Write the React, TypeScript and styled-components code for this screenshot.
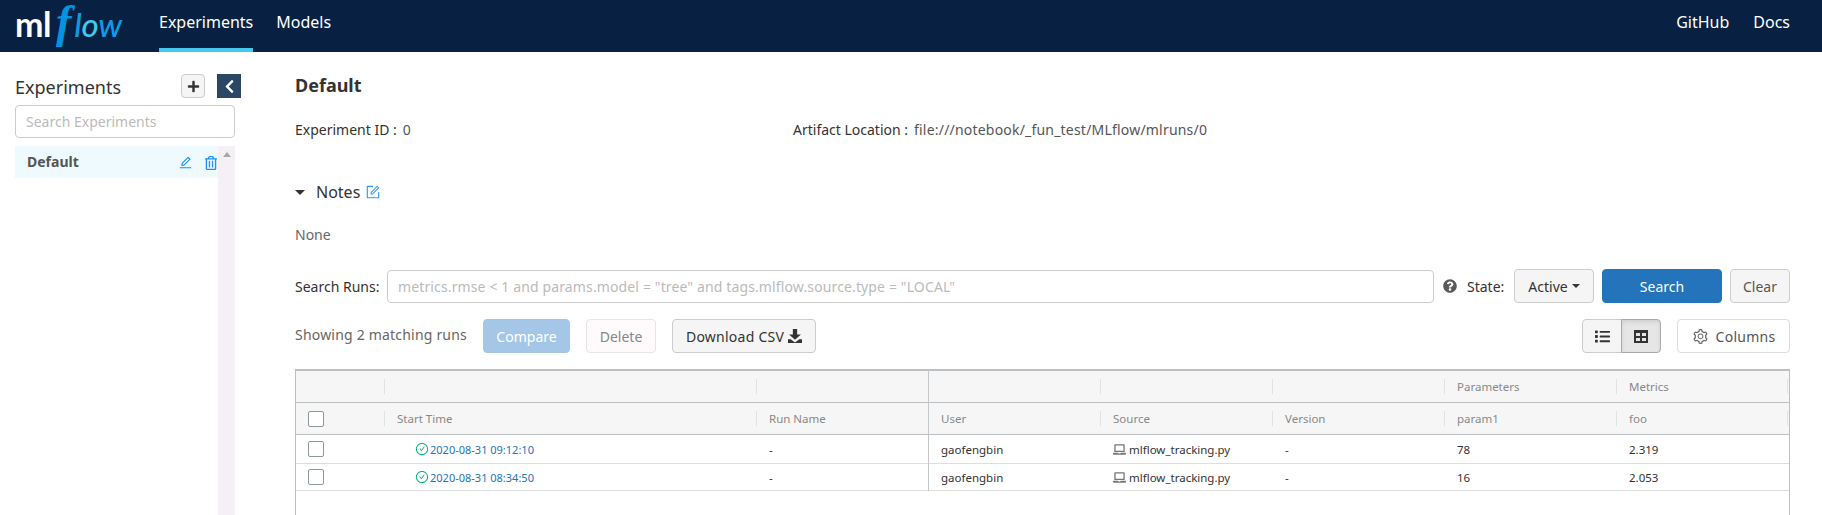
import React from "react";
import styled, { createGlobalStyle } from "styled-components";
import { AiOutlineEdit, AiOutlineForm, AiOutlineSetting, AiOutlineCheckCircle } from "react-icons/ai";
import { FaRegTrashAlt, FaPlus, FaChevronLeft, FaQuestionCircle, FaList, FaLaptop } from "react-icons/fa";

const FONT = `"Noto Sans", "Open Sans", Arial, sans-serif`;

const Global = createGlobalStyle`
  html, body { margin: 0; padding: 0; height: 515px; overflow: hidden; background: #fff; }
  body { font-family: ${FONT}; color: #333; font-size: 14px; }
  * { box-sizing: border-box; }
`;

const Page = styled.div`
  width: 1822px; height: 515px; display: flex; flex-direction: column; overflow: hidden;
`;
const Header = styled.header`
  height: 52px; flex: none; background: #082142; display: flex; align-items: stretch; padding: 0 32px 0 15px;
`;
const Logo = styled.div`
  width: 144px; height: 52px; display: flex; align-items: baseline; padding-top: 5px; line-height: 34px;
`;
const LogoMl = styled.span`
  font-family: "Lato", sans-serif; font-size: 34px; font-weight: 700; color: #fff; letter-spacing: -0.5px;
`;
const LogoF = styled.span`
  font-family: "Liberation Serif", serif; font-style: italic; font-weight: 700; font-size: 46px; color: #0194e2;
  padding: 0 3px 0 5px;
`;
const LogoRest = styled.span`
  font-family: "Lato", sans-serif; font-style: italic; font-size: 33px; font-weight: 500; color: #0d9ae6; letter-spacing: -0.3px;
`;
const LogoO = styled.span`color: #43c9ed;`;
const Tab = styled.a<{ $active?: boolean }>`
  height: 52px; display: flex; align-items: center; color: #fff; font-size: 16px; padding-bottom: 4px;
  margin-right: 23px; border-bottom: 4px solid ${(p) => (p.$active ? "#43c9ed" : "transparent")};
`;
const Spacer = styled.div`flex: 1;`;
const NavRight = styled(Tab)`margin: 0 0 0 24px;`;

const Body = styled.div`flex: 1; display: flex; min-height: 0;`;
const Sidebar = styled.aside`
  width: 241px; flex: none; padding: 22px 0 0 15px; display: flex; flex-direction: column;
`;
const SideHead = styled.div`display: flex; align-items: center; height: 24px;`;
const SideTitle = styled.div`flex: 1; font-size: 18px; color: #333; margin-top: 2px;`;
const PlusBtn = styled.button`
  width: 24px; height: 24px; padding: 0; border: 1px solid #ccc; border-radius: 4px; background: #f5f5f5; color: #333;
  display: flex; align-items: center; justify-content: center; font-size: 13px; margin-right: 12px;
`;
const CollapseBtn = styled.button`
  width: 24px; height: 24px; padding: 0; border: 0; background: #2a4765; color: #fff;
  display: flex; align-items: center; justify-content: center; font-size: 15px;
`;
const SideSearch = styled.input`
  width: 220px; height: 33px; margin-top: 7px; border: 1px solid #ccc; border-radius: 4px; padding: 0 10px;
  font: 14px ${FONT}; outline: none; color: #333;
  &::placeholder { color: #bbb; }
`;
const SideList = styled.div`width: 220px; flex: 1; margin-top: 8px; display: flex;`;
const SideItems = styled.div`flex: 1;`;
const SideItem = styled.div`
  height: 32px; background: #eefafe; display: flex; align-items: center; padding: 0 0 2px 12px;
  font-size: 14px; font-weight: 700; color: #555;
`;
const SideItemName = styled.span`flex: 1;`;
const SideIcon = styled.span`
  color: #1890ff; font-size: 15px; display: flex; margin-right: 6px; margin-top: 3px;
`;
const SideTrash = styled(SideIcon)`font-size: 14px; margin-right: 0; margin-left: 5px;`;
const ScrollTrack = styled.div`
  width: 17px; background: #f5f0f5; display: flex; justify-content: center; padding-top: 6px;
`;
const ScrollArrow = styled.div`
  width: 0; height: 0; border-left: 4px solid transparent; border-right: 4px solid transparent; border-bottom: 5px solid #a8a8a8;
`;

const Main = styled.main`flex: 1; padding: 23px 32px 0 54px; min-width: 0;`;
const Title = styled.h1`
  margin: 0; font-size: 18px; line-height: 21px; font-weight: 700; color: #333;
`;
const Meta = styled.div`
  margin-top: 23px; height: 22px; display: grid; grid-template-columns: 498px 1fr; font-size: 14px; line-height: 22px;
`;
const MetaItem = styled.div`color: #333;`;
const MetaValue = styled.span`color: #555; margin-left: 6px; letter-spacing: 0.2px;`;
const NotesRow = styled.div`margin-top: 40px; height: 22px; display: flex; align-items: center;`;
const Caret = styled.span`
  width: 0; height: 0; border-left: 5px solid transparent; border-right: 5px solid transparent; border-top: 5px solid #333;
  margin-right: 10px;
`;
const NotesLabel = styled.span`font-size: 16px; color: #333; margin-left: 1px;`;
const NotesEdit = styled.span`color: #2e98f9; display: flex; font-size: 16px; margin-left: 5px;`;
const NoneText = styled.div`margin-top: 21px; height: 22px; line-height: 22px; color: #666; font-size: 14px;`;

const SearchRow = styled.div`margin-top: 23px; height: 34px; display: flex; align-items: center;`;
const SearchLabel = styled.label`font-size: 14px; color: #333; width: 92px; flex: none; white-space: nowrap;`;
const SearchInput = styled.input`
  width: 1047px; height: 33px; flex: none; border: 1px solid #ccc; border-radius: 4px; padding: 0 10px;
  font: 14px ${FONT}; outline: none; letter-spacing: 0.13px;
  &::placeholder { color: #bbb; }
`;
const Help = styled.span`display: flex; color: #5a5a5a; font-size: 14px; margin-left: 9px;`;
const StateLabel = styled.span`font-size: 14px; color: #333; margin-left: 10px; width: 48px;`;

const Btn = styled.button<{ $w: number; $bg?: string; $fg?: string; $line?: string; $ml?: number }>`
  width: ${(p) => p.$w}px; height: 34px; flex: none; padding: 0; border-radius: 4px;
  border: 1px solid ${(p) => p.$line ?? "#ccc"};
  background: ${(p) => p.$bg ?? "#f5f5f5"}; color: ${(p) => p.$fg ?? "#333"};
  margin-left: ${(p) => p.$ml ?? 0}px; font: 14px ${FONT};
  display: flex; align-items: center; justify-content: center; gap: 4px;
`;
const WideLabel = styled.span`letter-spacing: 0.25px;`;
const BtnCaret = styled.span`
  width: 0; height: 0; border-left: 4px solid transparent; border-right: 4px solid transparent; border-top: 4px solid #333;
`;
const GearWrap = styled.span`display: flex; font-size: 17px; color: #666; margin-right: 3px;`;
const ActionRow = styled.div`margin-top: 16px; height: 34px; display: flex; align-items: center;`;
const Showing = styled.span`width: 188px; flex: none; color: #666; font-size: 14px; margin-top: -3px; letter-spacing: 0.2px;`;
const Toggle = styled.div`display: flex;`;
const ToggleBtn = styled.button<{ $on?: boolean }>`
  width: 40px; height: 34px; padding: 0; display: flex; align-items: center; justify-content: center; color: #333;
  background: ${(p) => (p.$on ? "#e6e6e6" : "#f5f5f5")}; border: 1px solid #ccc; font-size: 15px;
  border-radius: ${(p) => (p.$on ? "0 4px 4px 0" : "4px 0 0 4px")};
  margin-left: ${(p) => (p.$on ? "-1px" : "0")};
  box-shadow: ${(p) => (p.$on ? "inset 0 2px 4px rgba(0,0,0,.1)" : "none")};
  border-color: ${(p) => (p.$on ? "#aaa" : "#ccc")};
`;

const Table = styled.div`
  margin-top: 16px; width: 1495px; height: 160px; border: 1px solid #bbc0c3; border-width: 2px 1px 0 1px;
`;
const Row = styled.div<{ $h: number; $head?: boolean; $line: string }>`
  height: ${(p) => p.$h}px; display: grid; grid-template-columns: 88px 372px 172px 172px 172px 172px 172px 1fr;
  border-bottom: 1px solid ${(p) => p.$line};
  background: ${(p) => (p.$head ? "#f6f6f6" : "#fff")};
`;
const Cell = styled.div<{ $sep?: boolean; $strong?: boolean; $end?: boolean; $head?: boolean }>`
  position: relative; display: flex; align-items: center; padding-left: 13px; min-width: 0;
  font-size: 11.5px; color: ${(p) => (p.$head ? "#888" : "#333")};
  &::before {
    content: ""; position: absolute; left: 0; width: 1px;
    top: ${(p) => (p.$strong ? "-1px" : "8px")}; bottom: ${(p) => (p.$strong ? "-1px" : "8px")};
    background: ${(p) => (p.$strong ? "#c4c8ca" : p.$sep ? "#e2e2e2" : "transparent")};
  }
  &::after {
    content: ""; position: absolute; right: 1px; top: 8px; bottom: 8px; width: 1px;
    background: ${(p) => (p.$end ? "#e2e2e2" : "transparent")};
  }
`;
const CheckCell = styled(Cell)`padding-left: 12px;`;
const Box = styled.span`
  width: 16px; height: 16px; border: 1px solid #8a9a9a; border-radius: 2px; background: #fff; display: block;
`;
const RunLink = styled.a`
  color: #2374bb; font-size: 11px; display: flex; align-items: center; gap: 1px; margin-left: 18px;
`;
const Ok = styled.span`color: #10b27a; display: flex; font-size: 14px;`;
const Laptop = styled.span`color: #777; display: flex; font-size: 13px; margin-right: 3px;`;

const TableGlyph = () => (
  <svg width="14" height="13" viewBox="0 0 14 13" aria-hidden="true">
    <path fill="#333" fillRule="evenodd" d="M0 0h14v13H0zM2 3v3h4V3zM8 3v3h4V3zM2 8v3h4V8zM8 8v3h4V8z" />
  </svg>
);

const SaveGlyph = () => (
  <svg width="14" height="14" viewBox="0 0 13 13" aria-hidden="true">
    <path fill="#333" d="M4.5 0h4v5H12L6.5 10 1 5h3.5zM0 9.5h2.5L6.5 12.6l4-3.1H13V13H0z" />
  </svg>
);

const runs = [
  { time: "2020-08-31 09:12:10", p: "78", m: "2.319", h: 29, line: "#dedede" },
  { time: "2020-08-31 08:34:50", p: "16", m: "2.053", h: 27, line: "#dedede" },
];

export default function App() {
  return (
    <Page>
      <Global />
      <Header>
        <Logo>
          <LogoMl>ml</LogoMl>
          <LogoF>f</LogoF>
          <LogoRest>l<LogoO>o</LogoO>w</LogoRest>
        </Logo>
        <Tab $active>Experiments</Tab>
        <Tab>Models</Tab>
        <Spacer />
        <NavRight>GitHub</NavRight>
        <NavRight>Docs</NavRight>
      </Header>
      <Body>
        <Sidebar>
          <SideHead>
            <SideTitle>Experiments</SideTitle>
            <PlusBtn aria-label="New experiment"><FaPlus /></PlusBtn>
            <CollapseBtn aria-label="Collapse"><FaChevronLeft /></CollapseBtn>
          </SideHead>
          <SideSearch placeholder="Search Experiments" />
          <SideList>
            <SideItems>
              <SideItem>
                <SideItemName>Default</SideItemName>
                <SideIcon><AiOutlineEdit /></SideIcon>
                <SideTrash><FaRegTrashAlt /></SideTrash>
              </SideItem>
            </SideItems>
            <ScrollTrack><ScrollArrow /></ScrollTrack>
          </SideList>
        </Sidebar>
        <Main>
          <Title>Default</Title>
          <Meta>
            <MetaItem>Experiment ID :<MetaValue>0</MetaValue></MetaItem>
            <MetaItem>Artifact Location :<MetaValue>file:///notebook/_fun_test/MLflow/mlruns/0</MetaValue></MetaItem>
          </Meta>
          <NotesRow>
            <Caret />
            <NotesLabel>Notes</NotesLabel>
            <NotesEdit><AiOutlineForm /></NotesEdit>
          </NotesRow>
          <NoneText>None</NoneText>
          <SearchRow>
            <SearchLabel>Search Runs:</SearchLabel>
            <SearchInput placeholder={'metrics.rmse < 1 and params.model = "tree" and tags.mlflow.source.type = "LOCAL"'} />
            <Help><FaQuestionCircle /></Help>
            <StateLabel>State:</StateLabel>
            <Btn $w={80}>Active <BtnCaret /></Btn>
            <Btn $w={120} $ml={8} $bg="#2374bb" $fg="#fff" $line="#2374bb">Search</Btn>
            <Btn $w={60} $ml={8} $fg="#555">Clear</Btn>
          </SearchRow>
          <ActionRow>
            <Showing>Showing 2 matching runs</Showing>
            <Btn $w={87} $bg="#a4c7e8" $fg="#fff" $line="#a4c7e8">Compare</Btn>
            <Btn $w={70} $ml={16} $bg="#fffbfd" $fg="#888" $line="#e5e5e5">Delete</Btn>
            <Btn $w={144} $ml={16}><WideLabel>Download CSV</WideLabel> <SaveGlyph /></Btn>
            <Spacer />
            <Toggle>
              <ToggleBtn aria-label="List view"><FaList /></ToggleBtn>
              <ToggleBtn $on aria-label="Table view"><TableGlyph /></ToggleBtn>
            </Toggle>
            <Btn $w={113} $ml={16} $bg="#fff" $fg="#555" $line="#ddd"><GearWrap><AiOutlineSetting /></GearWrap><WideLabel>Columns</WideLabel></Btn>
          </ActionRow>
          <Table>
            <Row $h={32} $head $line="#bbc0c3">
              <Cell $head />
              <Cell $head $sep />
              <Cell $head $sep />
              <Cell $head $strong />
              <Cell $head $sep />
              <Cell $head $sep />
              <Cell $head $sep>Parameters</Cell>
              <Cell $head $sep $end>Metrics</Cell>
            </Row>
            <Row $h={32} $head $line="#bbc0c3">
              <CheckCell $head><Box /></CheckCell>
              <Cell $head $sep>Start Time</Cell>
              <Cell $head $sep>Run Name</Cell>
              <Cell $head $strong>User</Cell>
              <Cell $head $sep>Source</Cell>
              <Cell $head $sep>Version</Cell>
              <Cell $head $sep>param1</Cell>
              <Cell $head $sep $end>foo</Cell>
            </Row>
            {runs.map((r) => (
              <Row key={r.time} $h={r.h} $line={r.line}>
                <CheckCell><Box /></CheckCell>
                <Cell><RunLink><Ok><AiOutlineCheckCircle /></Ok>{r.time}</RunLink></Cell>
                <Cell>-</Cell>
                <Cell $strong>gaofengbin</Cell>
                <Cell><Laptop><FaLaptop /></Laptop>mlflow_tracking.py</Cell>
                <Cell>-</Cell>
                <Cell>{r.p}</Cell>
                <Cell>{r.m}</Cell>
              </Row>
            ))}
          </Table>
        </Main>
      </Body>
    </Page>
  );
}
